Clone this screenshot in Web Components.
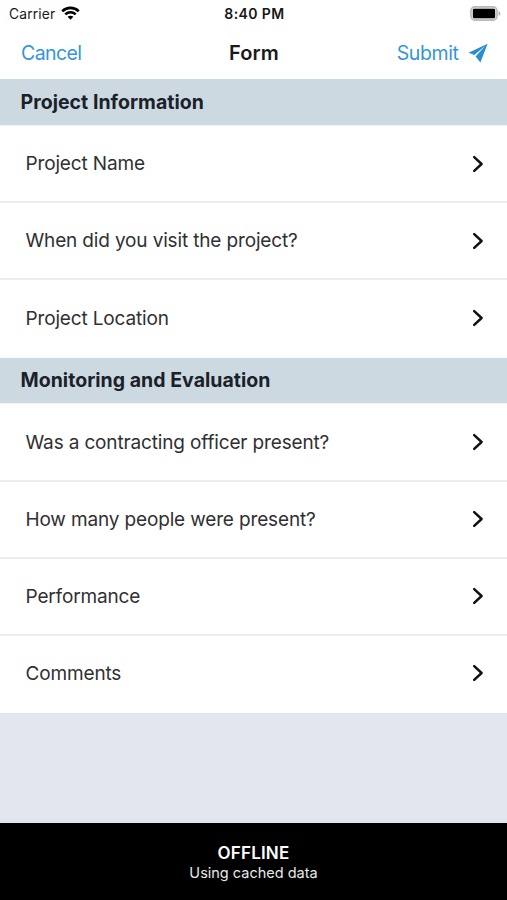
<!DOCTYPE html>
<html lang="en">
<head>
<meta charset="utf-8">
<title>Form</title>
<style>
  body { margin: 0; }
</style>
</head>
<body>
<form-screen></form-screen>
<script>
const define = (name, html) => {
  const template = document.createElement('template');
  template.innerHTML = html;
  customElements.define(name, class extends HTMLElement {
    constructor() {
      super();
      this.attachShadow({ mode: 'open' }).append(template.content.cloneNode(true));
    }
  });
};

define('status-bar', `
<style>
  :host { display: grid; grid-template-columns: 1fr auto 1fr; align-items: center; height: 27px; padding: 0 6px 0 9px; font-size: 13.8px; color: #171717; }
  .carrier { display: flex; align-items: center; gap: 5.5px; letter-spacing: .15px; }
  .carrier svg { margin-top: -2px; }
  .time { font-weight: 600; font-size: 14px; letter-spacing: .4px; padding-right: 1px; }
  .battery { justify-self: end; }
  svg { display: block; }
</style>
<div class="carrier"><span>Carrier</span>
<svg width="19" height="14" viewBox="0 0 19 14" fill="none" stroke="#000" stroke-width="2.6"><path d="M1.2 5.2C5.9.7 13.1.7 17.8 5.2M4.3 8.4c3-2.8 7.4-2.8 10.4 0"/><path d="M6.6 10.8 9.5 13.8l2.9-3c-1.6-1.5-4.2-1.5-5.8 0Z" fill="#000" stroke="none"/></svg></div>
<span class="time">8:40 PM</span>
<svg class="battery" width="31" height="15" viewBox="0 0 31 15"><rect x=".9" y=".9" width="26.2" height="13.2" rx="4" fill="#e4e4e4" stroke="#b9b9b9" stroke-width="1.6"/><rect x="2.9" y="2.7" width="22.2" height="9.6" rx="1.4" fill="#000"/><path d="M28.7 5q3.4 2.5 0 5Z" fill="#aaa"/></svg>`);

define('nav-bar', `
<style>
  :host { display: grid; grid-template-columns: 1fr auto 1fr; align-items: center; height: 52.4px; box-sizing: border-box; padding: 0 19px 0 21px; font-size: 19.5px; letter-spacing: -.6px; color: #3396d8; }
  .title { color: #1a1a1a; font-size: 20px; letter-spacing: .1px; font-weight: 600; padding-right: 1px; }
  .submit { justify-self: end; display: flex; align-items: center; gap: 9.5px; letter-spacing: -.4px; }
  svg { display: block; margin-top: -1px; }
</style>
<slot name="back"></slot><span class="title"><slot></slot></span>
<span class="submit"><slot name="action"></slot>
<svg width="20" height="20" viewBox="0 0 20 20" fill="#268fd0"><path d="M19.6.7.5 9.8l5.9 2.3L17.5 2.6 7.8 13.3v.4l4.6 5.7Z"/></svg></span>`);

define('section-header', `
<style>
  :host { display: flex; align-items: center; height: 46.9px; box-sizing: border-box; padding: 0 0 1px 20.5px; border-bottom: 1px solid #eff4f7; background: #cdd9e0; color: #1b212b; font-size: 19.5px; font-weight: 700; letter-spacing: .03px; }
</style><slot></slot>`);

define('form-row', `
<style>
  :host { display: flex; align-items: center; justify-content: space-between; height: 77.1px; box-sizing: border-box; padding: 0 23.5px 0 25.5px; border-bottom: 2px solid #ebedef; color: #303033; font-size: 19px; letter-spacing: -.15px; background: #fff; }
  :host(:last-child) { border-bottom-color: transparent; }
  svg { display: block; }
</style><slot></slot>
<svg width="12" height="18" viewBox="0 0 12 18" fill="none" stroke="#111" stroke-width="2.5" stroke-linecap="round" stroke-linejoin="round"><path d="M2.2 2.2 9.6 9l-7.4 6.8"/></svg>`);

define('form-section', `<style>:host { display: block; background: #fff; }</style><slot name="header"></slot><slot></slot>`);

define('offline-banner', `
<style>
  :host { display: flex; flex-direction: column; align-items: center; height: 77.5px; box-sizing: border-box; padding-top: 20px; background: #000; color: #e8e8e8; font-size: 14.5px; line-height: 20px; }
  .status { color: #fff; font-size: 17px; letter-spacing: .2px; font-weight: 600; }
</style><span class="status"><slot name="status"></slot></span><slot></slot>`);

define('form-screen', `
<style>
  :host { display: flex; flex-direction: column; width: 507px; height: 900px; background: #e1e6ef; font-family: Inter, "Liberation Sans", sans-serif; white-space: nowrap; overflow: hidden; }
  status-bar, nav-bar { background: #fff; }
  offline-banner { margin-top: auto; }
</style>
<status-bar></status-bar>
<nav-bar><span slot="back">Cancel</span>Form<span slot="action">Submit</span></nav-bar>
<form-section>
  <section-header slot="header">Project Information</section-header>
  <form-row>Project Name</form-row>
  <form-row>When did you visit the project?</form-row>
  <form-row>Project Location</form-row>
</form-section>
<form-section>
  <section-header slot="header">Monitoring and Evaluation</section-header>
  <form-row>Was a contracting officer present?</form-row>
  <form-row>How many people were present?</form-row>
  <form-row>Performance</form-row>
  <form-row>Comments</form-row>
</form-section>
<offline-banner><span slot="status">OFFLINE</span>Using cached data</offline-banner>`);
</script>
</body>
</html>
